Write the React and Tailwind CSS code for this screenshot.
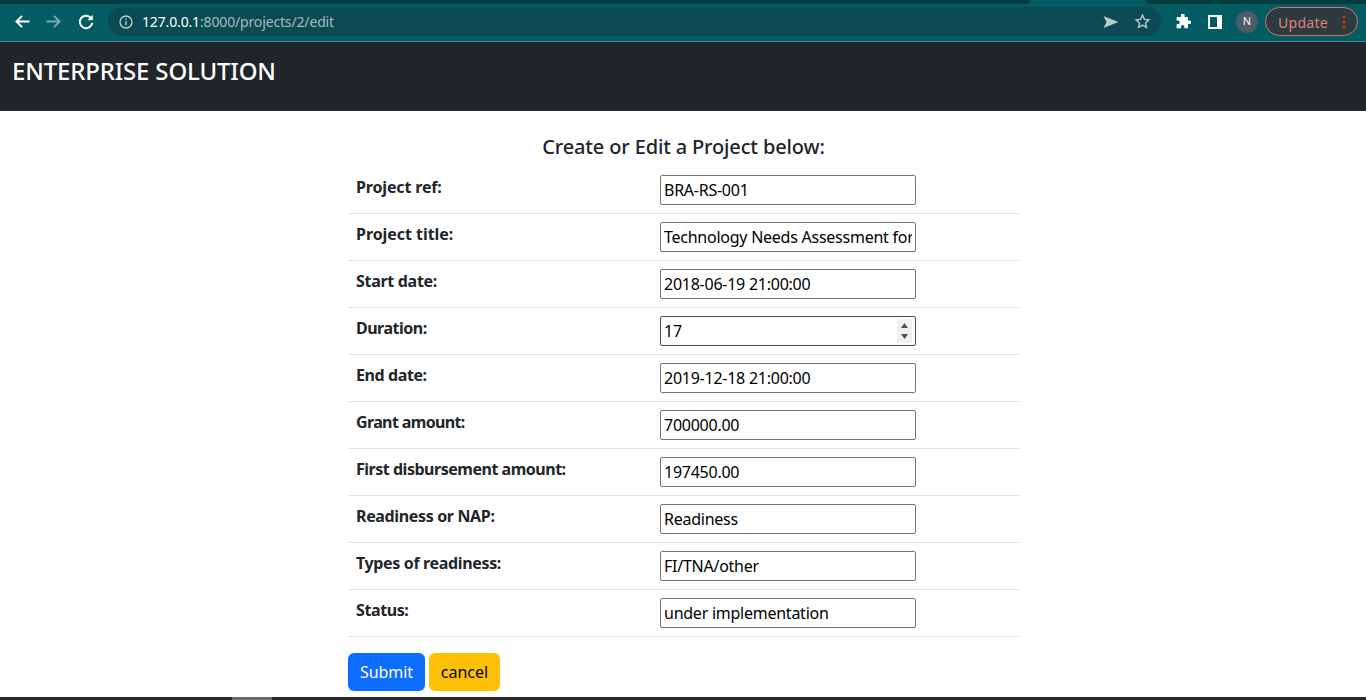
const FONT = "font-['Noto_Sans','Open_Sans',sans-serif]";

const rows = [
  ["Project ref:", "BRA-RS-001", "tracking-[-0.15px]"],
  ["Project title:", "Technology Needs Assessment for Brazil", "tracking-[-0.05px]"],
  ["Start date:", "2018-06-19 21:00:00", "tracking-[-0.3px]"],
  ["Duration:", "17", "tracking-[-0.5px]", "number"],
  ["End date:", "2019-12-18 21:00:00", "tracking-[-0.4px]"],
  ["Grant amount:", "700000.00", "tracking-[-0.63px]"],
  ["First disbursement amount:", "197450.00", "tracking-[-0.48px]"],
  ["Readiness or NAP:", "Readiness", "tracking-[-0.35px]"],
  ["Types of readiness:", "FI/TNA/other", "tracking-[-0.35px]"],
  ["Status:", "under implementation", "tracking-[-0.4px]"],
];

function Chrome() {
  return (
    <div className="h-[42px] bg-[#045b62] border-b border-[#4f8f93] flex flex-col">
      <div className="h-[6px] flex shrink-0">
        <div className="w-[1030px] h-[4px] bg-[#033d42] rounded-br-[4px]" />
        <div className="flex-1" />
        <div className="w-[220px] h-[4px] bg-[#033d42] rounded-bl-[4px]" />
      </div>
      <div className="flex-1 flex items-center pl-[12px] pr-[8px]">
        <svg width="21" height="21" viewBox="0 0 24 24" fill="none" stroke="#fff" strokeWidth="2.2" className="mr-[10px] mt-[-4px]"><path d="M20 12H5M11.5 5.5 5 12l6.5 6.5" /></svg>
        <svg width="21" height="21" viewBox="0 0 24 24" fill="none" stroke="#7fa9ac" strokeWidth="2.2" className="mr-[12px] mt-[-4px]"><path d="M4 12h15M12.5 5.5 19 12l-6.5 6.5" /></svg>
        <svg width="20" height="20" viewBox="0 0 24 24" fill="none" stroke="#fff" strokeWidth="2.4" className="mr-[12px] mt-[-4px]"><path d="M18.5 8A7.5 7.5 0 1 0 19.5 13" /><path d="M20 3.5V9.5H14" fill="#fff" strokeWidth="0.5" /></svg>
        <div className="w-[1053px] h-[29px] mt-[-4px] rounded-full bg-[#0a4a52] flex items-center pl-[10px] pr-[10px]">
          <svg width="16" height="16" viewBox="0 0 16 16" fill="none" stroke="#c3d2d4" strokeWidth="1.3" className="mr-[8px]"><circle cx="8" cy="8" r="6" /><path d="M8 7v4.2M8 4.6v1.2" /></svg>
          <span className={`${FONT} text-[14px] tracking-[-0.15px] text-white`}>127.0.0.1<span className="text-[#a4bcbe]">:8000/projects/2/edit</span></span>
          <div className="flex-1" />
          <svg width="16" height="14" viewBox="0 0 16 14" fill="#b9c8ca" className="mr-[15px]"><path d="M0.5 1l15 6-15 6 3-6z" /></svg>
          <svg width="17" height="17" viewBox="0 0 24 24" fill="none" stroke="#b9c8ca" strokeWidth="2"><path d="M12 3l2.7 6 6.3.7-4.7 4.3 1.3 6.4L12 17.2 6.4 20.4l1.3-6.4L3 9.7 9.3 9z" /></svg>
        </div>
        <svg width="16" height="16" viewBox="0 0 16 16" fill="#fff" className="ml-[14px] mt-[-4px]"><path d="M6 1.2a1.8 1.8 0 0 1 3.6 0V3H13v3.4h1.4a1.8 1.8 0 0 1 0 3.6H13v4.2H9.4v-1.4a1.7 1.7 0 0 0-3.4 0v1.4H1.6v-4h1.2a1.9 1.9 0 0 0 0-3.8H1.6V3H6z" /></svg>
        <div className="ml-[17px] mt-[-4px] w-[14px] h-[14px] border-[2px] border-white border-r-[5px]" />
        <div className={`${FONT} ml-[14px] mt-[-4px] w-[22px] h-[22px] rounded-full bg-[#4b5b68] text-white text-[11px] flex items-center justify-center`}>N</div>
        <div className={`${FONT} ml-[7px] mt-[-4px] w-[93px] h-[29px] rounded-full border border-[#d5766f] bg-[#2d3a3e] text-[#e0827a] text-[14px] tracking-[0.3px] flex items-center pl-[12px]`}>
          <span className="mt-[1px]">Update</span>
          <svg width="4" height="14" viewBox="0 0 4 14" fill="#d93025" className="ml-[14px]"><circle cx="2" cy="2" r="1.5" /><circle cx="2" cy="7" r="1.5" /><circle cx="2" cy="12" r="1.5" /></svg>
        </div>
      </div>
    </div>
  );
}

export default function App() {
  return (
    <div className={`${FONT} h-[700px] overflow-hidden bg-white flex flex-col text-[#212529]`}>
      <Chrome />
      <header className="h-[69px] shrink-0 bg-[#212529] pl-[12px] pt-[11px] text-white text-[24px] leading-[36px] font-medium tracking-[-0.16px]">ENTERPRISE SOLUTION</header>
      <main className="flex-1 w-[671px] ml-[348px] flex flex-col">
        <h5 className="mt-[24px] mb-[8px] text-center text-[20px] leading-[24px] font-medium tracking-[-0.15px]">Create or Edit a Project below:</h5>
        <div className="flex flex-col">
          {rows.map(([label, value, spacing, type]) => (
            <div key={label} className="flex h-[47px] border-b border-[#dee2e6] p-[8px]">
              <div className={`w-[296px] shrink-0 font-bold text-[16px] leading-[24px] ${spacing}`}>{label}</div>
              <div className="pl-[8px] relative">
                <input
                  readOnly
                  type={type || "text"}
                  value={value}
                  className={`block w-[256px] h-[30px] border rounded-[2px] px-[3px] text-[16px] tracking-[-0.25px] text-black outline-none [appearance:textfield] [&::-webkit-inner-spin-button]:appearance-none ${type ? "border-[#4f4f4f]" : "border-[#767676]"}`}
                />
                {type && (
                  <div className="absolute left-[245px] top-[3px] w-[15px] h-[24px] bg-[#f0f0f0] flex flex-col items-center justify-center gap-[6px]">
                    <svg width="7" height="5" viewBox="0 0 7 5" fill="#505050"><path d="M3.5 0 7 5H0z" /></svg>
                    <svg width="7" height="5" viewBox="0 0 7 5" fill="#505050"><path d="M0 0h7L3.5 5z" /></svg>
                  </div>
                )}
              </div>
            </div>
          ))}
        </div>
        <div className="flex gap-[4px] mt-[16px]">
          <button className="h-[38px] w-[77px] rounded-[6px] bg-[#0d6efd] text-white text-[16px] tracking-[-0.1px]">Submit</button>
          <button className="h-[38px] w-[71px] rounded-[6px] bg-[#ffc107] text-black text-[16px]">cancel</button>
        </div>
      </main>
      <div className="h-[3px] shrink-0 bg-[#2b2b2b] relative">
        <div className="absolute left-[232px] top-0 h-[3px] w-[40px] bg-[#6b6b6b]" />
      </div>
    </div>
  );
}
